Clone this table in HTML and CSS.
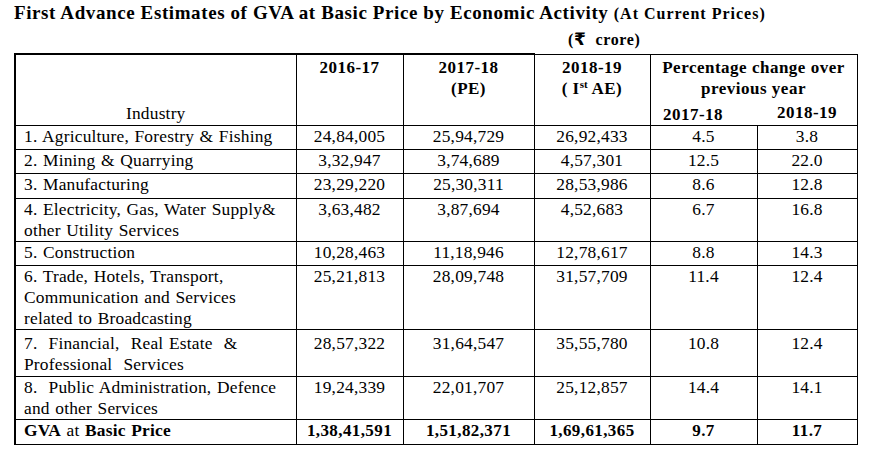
FILE: index.html
```html
<!DOCTYPE html>
<html lang="en">
<head>
<meta charset="utf-8">
<title>First Advance Estimates of GVA</title>
<link rel="stylesheet" href="styles.css">
</head>
<body>
<div class="page">
  <h1 class="title">First Advance Estimates of GVA at Basic Price by Economic Activity <span class="sub">(At Current Prices)</span></h1>
  <div class="unit">(<span class="rupee">₹</span>&nbsp; crore)</div>
  <table class="gva">
    <colgroup>
      <col class="c-ind">
      <col class="c-a">
      <col class="c-b">
      <col class="c-c">
      <col class="c-d">
      <col class="c-e">
    </colgroup>
    <thead>
      <tr class="r-head">
        <th class="ind-head thick">Industry</th>
        <th class="yr thick">2016-17</th>
        <th class="yr thick">2017-18<br>(PE)</th>
        <th class="yr">2018-19<br>( I<sup>st</sup> AE)</th>
        <th class="yr pct" colspan="2">
          <div class="pct-title">Percentage change over<br>previous year</div>
          <div class="pct-years"><span class="py1">2017-18</span><span class="py2">2018-19</span></div>
        </th>
      </tr>
    </thead>
    <tbody>
      <tr class="r1"><td class="ind">1. Agriculture, Forestry &amp; Fishing</td><td>24,84,005</td><td>25,94,729</td><td>26,92,433</td><td>4.5</td><td>3.8</td></tr>
      <tr class="r1"><td class="ind">2. Mining &amp; Quarrying</td><td>3,32,947</td><td>3,74,689</td><td>4,57,301</td><td>12.5</td><td>22.0</td></tr>
      <tr class="r1b"><td class="ind">3. Manufacturing</td><td>23,29,220</td><td>25,30,311</td><td>28,53,986</td><td>8.6</td><td>12.8</td></tr>
      <tr class="r2"><td class="ind">4. Electricity, Gas, Water Supply&amp;<br>other Utility Services</td><td>3,63,482</td><td>3,87,694</td><td>4,52,683</td><td>6.7</td><td>16.8</td></tr>
      <tr class="r1"><td class="ind">5. Construction</td><td>10,28,463</td><td>11,18,946</td><td>12,78,617</td><td>8.8</td><td>14.3</td></tr>
      <tr class="r3"><td class="ind">6. Trade, Hotels, Transport,<br>Communication and Services<br>related to Broadcasting</td><td>25,21,813</td><td>28,09,748</td><td>31,57,709</td><td>11.4</td><td>12.4</td></tr>
      <tr class="r2b"><td class="ind">7.&nbsp; Financial,&nbsp; Real Estate&nbsp; &amp;<br>Professional&nbsp; Services</td><td>28,57,322</td><td>31,64,547</td><td>35,55,780</td><td>10.8</td><td>12.4</td></tr>
      <tr class="r2"><td class="ind">8.&nbsp; Public Administration, Defence<br>and other Services</td><td>19,24,339</td><td>22,01,707</td><td>25,12,857</td><td>14.4</td><td>14.1</td></tr>
      <tr class="r1b total"><td class="ind"><b>GVA</b> at <b>Basic Price</b></td><td>1,38,41,591</td><td>1,51,82,371</td><td>1,69,61,365</td><td>9.7</td><td>11.7</td></tr>
    </tbody>
  </table>
</div>
</body>
</html>
```
FILE: styles.css
```css
html, body {
  margin: 0;
  padding: 0;
  background: #fff;
}
body {
  font-family: "Liberation Serif", "Times New Roman", "DejaVu Serif", serif;
  color: #000;
}
.page {
  padding: 1px 0 0 14px;
}
.title {
  margin: 0;
  font-size: 19px;
  letter-spacing: 0.6px;
  font-weight: bold;
  line-height: 24px;
  white-space: nowrap;
}
.title .sub {
  font-size: 16px;
  letter-spacing: 1px;
}
.unit {
  margin: 0 0 0 554px;
  font-size: 16px;
  letter-spacing: 0.6px;
  font-weight: bold;
  line-height: 26px;
  height: 27px;
}
.rupee {
  font-family: "DejaVu Sans", sans-serif;
  font-size: 17px;
}
.gva {
  border-collapse: collapse;
  table-layout: fixed;
  width: 842px;
  font-size: 17.4px;
  letter-spacing: 0.2px;
  word-spacing: 1px;
  line-height: 21px;
}
.c-ind { width: 281px; }
.c-a { width: 107px; }
.c-b { width: 131px; }
.c-c { width: 116px; }
.c-d { width: 107px; }
.c-e { width: 100px; }
.gva th, .gva td {
  border: 1px solid #000;
  padding: 0;
  vertical-align: top;
  text-align: center;
}
.gva th {
  font-weight: bold;
  font-size: 17px;
  letter-spacing: 0.5px;
  word-spacing: 0;
  padding-top: 2px;
}
.gva th.thick {
  border-top-width: 2px;
}
.gva th.ind-head, .gva td.ind {
  border-left-width: 2px;
}
.gva th.ind-head {
  font-weight: normal;
  font-size: 17.4px;
  letter-spacing: 0.2px;
  vertical-align: bottom;
  padding-bottom: 1px;
}
.gva td.ind {
  text-align: left;
  padding-left: 8px;
  white-space: nowrap;
}
.r-head { height: 71px; }
.r1 { height: 24px; }
.r1b { height: 25px; }
.r2 { height: 43px; }
.r2b { height: 47px; }
.r3 { height: 64px; }
.r2b td {
  padding-top: 3px;
}
.total td {
  font-weight: bold;
  font-size: 17px;
  letter-spacing: 0.4px;
}
.total td.ind {
  font-weight: normal;
  font-size: 17.4px;
  letter-spacing: 0.2px;
}
.gva sup {
  font-size: 11px;
  line-height: 0;
  vertical-align: 6px;
  letter-spacing: 0;
}
.pct-title {
  line-height: 21px;
}
.pct-years {
  display: flex;
  margin-top: 4px;
  line-height: 20px;
}
.py1 {
  width: 107px;
  padding-right: 22px;
  box-sizing: border-box;
  position: relative;
  top: 2px;
}
.py2 {
  width: 99px;
}
```
